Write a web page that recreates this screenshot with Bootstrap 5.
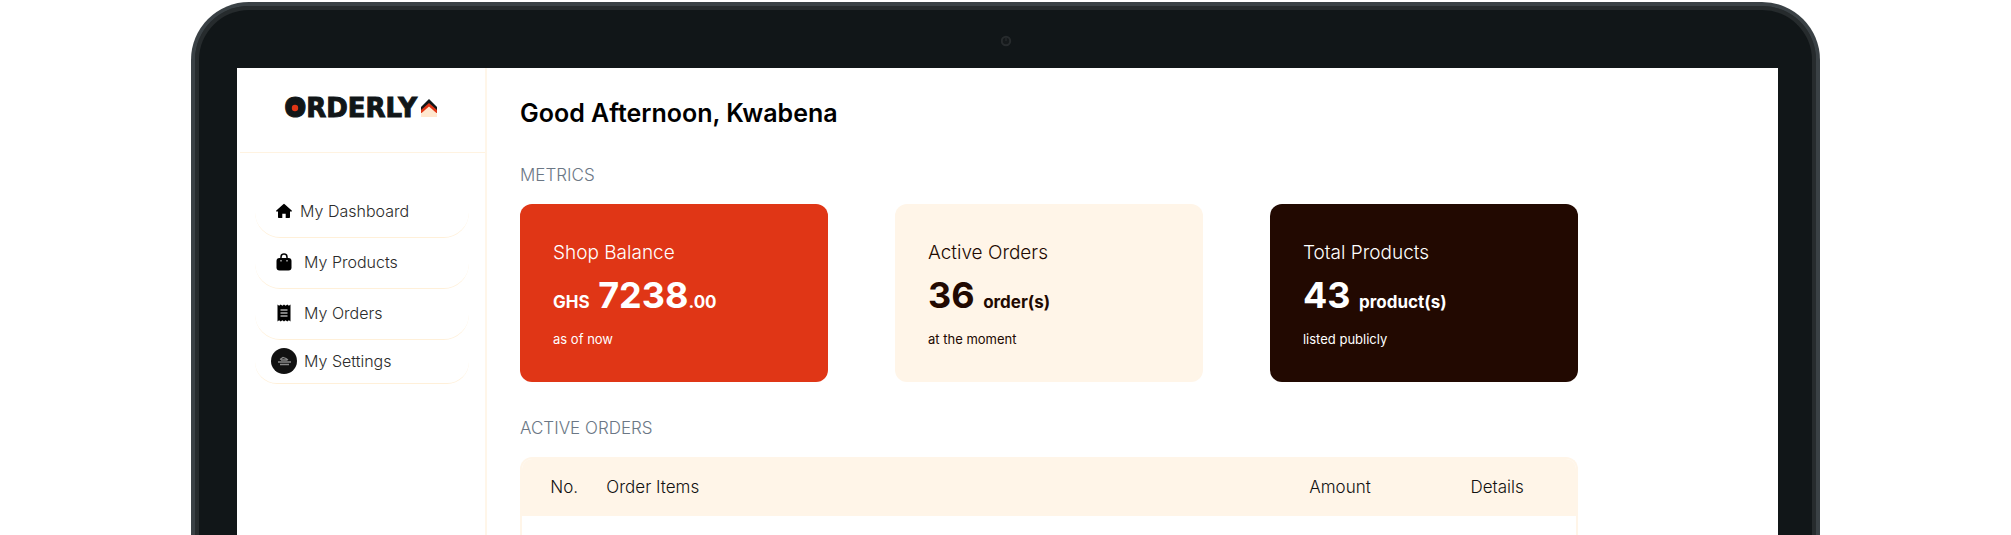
<!DOCTYPE html>
<html lang="en">
<head>
<meta charset="utf-8">
<meta name="viewport" content="width=device-width, initial-scale=1">
<title>Orderly – Dashboard</title>
<link href="https://cdn.jsdelivr.net/npm/bootstrap@5.3.0/dist/css/bootstrap.min.css" rel="stylesheet">
<style>
  :root { --cream: #fff5e8; --line: #fff6e9; --red: #e03616; --cocoa: #220901; --ink: #111618; }
  body { font-family: Inter, "Liberation Sans", sans-serif; background: #fff; color: #000; }
  .stage { height: 100vh; padding-top: 2px; }
  .laptop { width: 81%; border: 4px solid #3a4145; border-bottom: 0; border-radius: 58px 58px 0 0; background: #262b2d; }
  .bezel { border: 4px solid #262b2d; border-bottom: 0; border-radius: 54px 54px 0 0; background: var(--ink); padding: 0 34px 0 38px; }
  .camera-bar { height: 58px; padding-top: 3px; }
  .screen { background: #fff; }
  .sidebar { width: 250px; border-right: 2px solid var(--line); }
  .logo-box { height: 85px; margin-left: 3px; border-bottom: 1px solid #fff3e1; padding: 0 4px 4px 0; }
  .wordmark { font-family: "DejaVu Sans", sans-serif; font-weight: 700; font-size: 26px; line-height: 24px; color: var(--ink); -webkit-text-stroke: 1px var(--ink); }
  .wordmark svg { left: 4px; top: 4px; }
  .side-menu { padding: 34px 16px 0 18px; }
  .side-menu a { height: 51px; padding: 0 16px 2px; color: #2b2b2b; font-size: 16px; font-weight: 300; border-bottom: 1px solid #fff0d9; border-radius: 26px; text-decoration: none; }
  .side-menu a.compact { height: 44px; }
  .side-menu .ico { width: 26px; margin-right: 7px; }
  .side-menu .home .ico { margin-right: 3px; }
  .content { padding: 29px 0 0 33px; }
  .inner { width: 84.1%; }
  h1 { font-size: 25px; line-height: 32px; font-weight: 600; margin: 0; }
  h2 { font-size: 17px; line-height: 20px; font-weight: 300; color: #6b7785; margin: 0; padding: 36px 0 19px; }
  .metrics { gap: 67px; }
  .metric { flex: 1 1 0; height: 178px; border-radius: 12px; padding: 35px 33px 0; }
  .metric p { margin: 0; }
  .metric .label { font-size: 19px; line-height: 27px; font-weight: 300; }
  .metric .value { font-size: 36px; line-height: 58px; font-weight: 700; }
  .metric .unit { font-size: 17px; font-weight: 700; }
  .metric .note { font-size: 13px; line-height: 16px; font-weight: 400; }
  .bg-red { background: var(--red); color: #fff; }
  .bg-cream { background: var(--cream); color: var(--cocoa); }
  .bg-cocoa { background: var(--cocoa); color: #fff; }
  .orders { border: 2px solid var(--cream); border-bottom: 0; border-radius: 12px 12px 0 0; overflow: hidden; }
  .orders table { width: 100%; table-layout: fixed; }
  .orders th { background: var(--cream); height: 57px; font-size: 17px; font-weight: 300; color: #111; padding: 0; }
</style>
</head>
<body>
<div class="stage d-flex flex-column overflow-hidden">
  <div class="laptop mx-auto flex-grow-1 d-flex flex-column">
    <div class="bezel flex-grow-1 d-flex flex-column">
      <div class="camera-bar d-flex align-items-center justify-content-center">
        <svg width="14" height="14" viewBox="0 0 14 14" aria-hidden="true"><circle cx="5" cy="7" r="4.2" fill="#15191b" stroke="#272b2d" stroke-width="2"/><path d="M5 4v3" stroke="#2a2f31" stroke-width="1"/></svg>
      </div>
      <div class="screen flex-grow-1 d-flex">
        <aside class="sidebar flex-shrink-0">
          <div class="logo-box d-flex align-items-center justify-content-center gap-1">
            <span class="wordmark position-relative">ORDERLY<svg class="position-absolute" width="14" height="16" viewBox="0 0 14 16" aria-hidden="true"><ellipse cx="7" cy="8" rx="6" ry="8" fill="#111618"/><circle cx="7" cy="8" r="3.2" fill="#e03616"/></svg></span>
            <svg width="16" height="18" viewBox="0 0 16 18" aria-hidden="true"><path d="M8 0l8 8v4H0V8z" fill="#111618"/><path d="M8 4l8 7v3H0v-3z" fill="#e03616"/><path d="M8 7.500l8 7V18H0v-3.500z" fill="#ffe8cf"/></svg>
          </div>
          <nav class="side-menu d-flex flex-column">
            <a class="home d-flex align-items-center" href="#"><span class="ico d-flex justify-content-center"><svg width="16" height="16" viewBox="0 0 16 16"><path d="M7.300 1.200a1 1 0 0 1 1.400 0l7 6.200c.5.500.2 1.200-.5 1.200H14V14c0 .6-.4 1-1 1H9.700v-4.300H6.300V15H3c-.6 0-1-.4-1-1V8.600H.8C.1 8.600-.2 7.900.3 7.400z"/></svg></span>My Dashboard</a>
            <a class="d-flex align-items-center" href="#"><span class="ico d-flex justify-content-center"><svg width="16" height="18" viewBox="0 0 16 18"><path d="M5 6V4a3 3 0 0 1 6 0v2" fill="none" stroke="#000" stroke-width="1.500"/><rect x=".5" y="5" width="15" height="12.500" rx="3"/><path d="M5 7v1.500M11 7v1.500" stroke="#fff" stroke-width="1"/></svg></span>My Products</a>
            <a class="d-flex align-items-center" href="#"><span class="ico d-flex justify-content-center"><svg width="14" height="18" viewBox="0 0 14 18"><path d="M.5.500l1.600 1.200L3.700.500l1.700 1.200L7 .5l1.600 1.200L10.300.5l1.600 1.200L13.500.5v17l-1.600-1.200-1.600 1.200-1.700-1.200L7 17.500l-1.600-1.200-1.700 1.200-1.600-1.200L.5 17.500z"/><path d="M3.500 6h7M3.500 9h7M3.500 12h7" stroke="#aaa" stroke-width="1.300"/></svg></span>My Orders</a>
            <a class="compact d-flex align-items-center" href="#"><span class="ico d-flex justify-content-center"><svg width="26" height="26" viewBox="0 0 26 26"><circle cx="13" cy="13" r="13" fill="#111"/><path d="M7 14h13M9 16.500h9M9 11.500l3-2 3 1 2 1.500M10 12h6" stroke="#888" stroke-width="1.300" fill="none"/></svg></span>My Settings</a>
          </nav>
        </aside>
        <main class="content flex-grow-1">
          <div class="inner h-100 d-flex flex-column">
            <h1>Good Afternoon, Kwabena</h1>
            <h2>METRICS</h2>
            <div class="metrics d-flex">
              <section class="metric bg-red">
                <p class="label">Shop Balance</p>
                <p class="value"><span class="unit">GHS</span> 7238<span class="unit">.00</span></p>
                <p class="note">as of now</p>
              </section>
              <section class="metric bg-cream">
                <p class="label">Active Orders</p>
                <p class="value">36 <span class="unit">order(s)</span></p>
                <p class="note">at the moment</p>
              </section>
              <section class="metric bg-cocoa">
                <p class="label">Total Products</p>
                <p class="value">43 <span class="unit">product(s)</span></p>
                <p class="note">listed publicly</p>
              </section>
            </div>
            <h2>ACTIVE ORDERS</h2>
            <div class="orders flex-grow-1">
              <table>
                <colgroup><col style="width:8%"><col style="width:66.700%"><col style="width:15.300%"><col style="width:10%"></colgroup>
                <thead><tr><th class="text-center">No.</th><th>Order Items</th><th>Amount</th><th>Details</th></tr></thead>
              </table>
            </div>
          </div>
        </main>
      </div>
    </div>
  </div>
</div>
<script src="https://cdn.jsdelivr.net/npm/bootstrap@5.3.0/dist/js/bootstrap.bundle.min.js"></script>
</body>
</html>
